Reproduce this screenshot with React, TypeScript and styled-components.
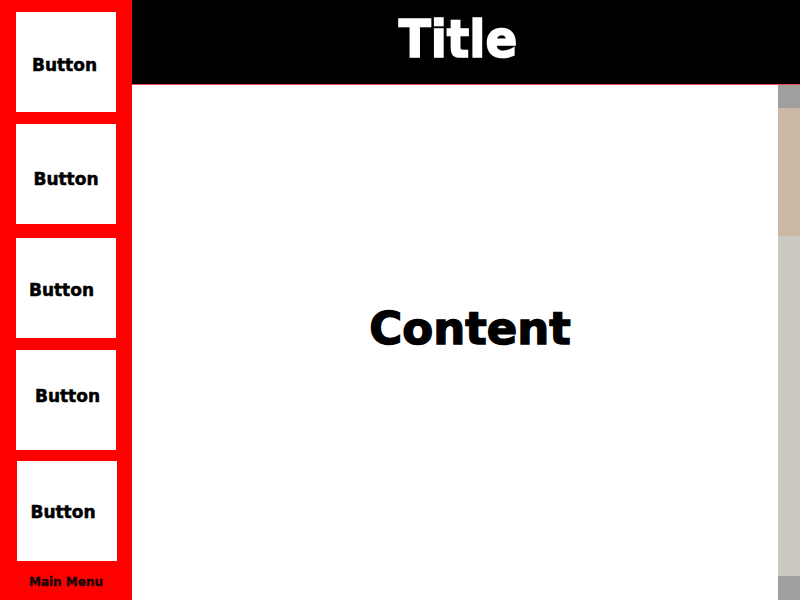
import React from "react";
import styled, { createGlobalStyle } from "styled-components";

const Global = createGlobalStyle`
  html, body { margin: 0; padding: 0; width: 800px; height: 600px; overflow: hidden; }
  body { font-family: "DejaVu Sans", "Liberation Sans", sans-serif; font-weight: bold; }
  #root { width: 800px; height: 600px; }
`;

const Page = styled.div`
  display: flex;
  width: 800px;
  height: 600px;
`;

const Sidebar = styled.nav`
  width: 132px;
  flex: none;
  background: #ff0000;
  display: flex;
  flex-direction: column;
  padding: 12px 0 0 16px;
  box-sizing: border-box;
`;

const MenuButton = styled.button<{ $mt: number; $ml: number }>`
  width: 100px;
  height: 100px;
  margin-top: ${(p) => p.$mt}px;
  margin-left: ${(p) => p.$ml}px;
  flex: none;
  border: none;
  padding: 0;
  background: #ffffff;
  display: flex;
  align-items: center;
  justify-content: center;
  font-family: "DejaVu Sans", sans-serif;
  font-weight: bold;
  font-size: 17px;
  color: #000;
  -webkit-text-stroke: 0.5px #000;
  cursor: pointer;
`;

const ButtonLabel = styled.span<{ $dx: number; $dy: number }>`
  transform: translate(${(p) => p.$dx}px, ${(p) => p.$dy}px);
`;

const MenuCaption = styled.div`
  margin-top: 14px;
  width: 100px;
  text-align: center;
  font-size: 12px;
  font-weight: bold;
  color: #1a0606;
  -webkit-text-stroke: 0.4px #1a0606;
`;

const Main = styled.div`
  flex: 1;
  display: flex;
  flex-direction: column;
  min-width: 0;
`;

const Header = styled.header`
  height: 84px;
  flex: none;
  background: #000;
  border-bottom: 1px solid #f04848;
  display: flex;
  align-items: center;
  justify-content: center;
`;

const Title = styled.h1`
  margin: 0;
  color: #fff;
  font-family: "DejaVu Sans", sans-serif;
  font-weight: bold;
  font-size: 47px;
  -webkit-text-stroke: 1.5px #fff;
  transform: translate(-8px, -4px) scaleY(1.1);
`;

const Body = styled.div`
  flex: 1;
  display: flex;
  min-height: 0;
`;

const ContentArea = styled.main`
  flex: 1;
  background: #fff;
  display: flex;
  align-items: center;
  justify-content: center;
  padding: 0 0 28px 30px;
`;

const ContentText = styled.div`
  font-family: "DejaVu Sans", sans-serif;
  font-weight: bold;
  font-size: 45px;
  color: #000;
  -webkit-text-stroke: 1.4px #000;
`;

const Scrollbar = styled.div`
  width: 22px;
  flex: none;
  display: flex;
  flex-direction: column;
  background: #ccc8c2;
`;

const ScrollCap = styled.div<{ $h: number }>`
  height: ${(p) => p.$h}px;
  flex: none;
  background: #a09f9d;
`;

const Thumb = styled.div`
  height: 128px;
  flex: none;
  background: #cbb9a5;
`;

const Track = styled.div`
  flex: 1;
`;

const buttons = [
  { mt: 0, ml: 0, dx: -1.5, dy: 2.5 },
  { mt: 12, ml: 0, dx: 0, dy: 5 },
  { mt: 14, ml: 0, dx: -4.5, dy: 1.5 },
  { mt: 12, ml: 0, dx: 1.5, dy: -4 },
  { mt: 11, ml: 1, dx: -4, dy: 1 },
];

export default function App() {
  return (
    <>
      <Global />
      <Page>
        <Sidebar>
          {buttons.map((b, i) => (
            <MenuButton key={i} $mt={b.mt} $ml={b.ml}>
              <ButtonLabel $dx={b.dx} $dy={b.dy}>Button</ButtonLabel>
            </MenuButton>
          ))}
          <MenuCaption>Main Menu</MenuCaption>
        </Sidebar>
        <Main>
          <Header>
            <Title>Title</Title>
          </Header>
          <Body>
            <ContentArea>
              <ContentText>Content</ContentText>
            </ContentArea>
            <Scrollbar>
              <ScrollCap $h={23} />
              <Thumb />
              <Track />
              <ScrollCap $h={24} />
            </Scrollbar>
          </Body>
        </Main>
      </Page>
    </>
  );
}
